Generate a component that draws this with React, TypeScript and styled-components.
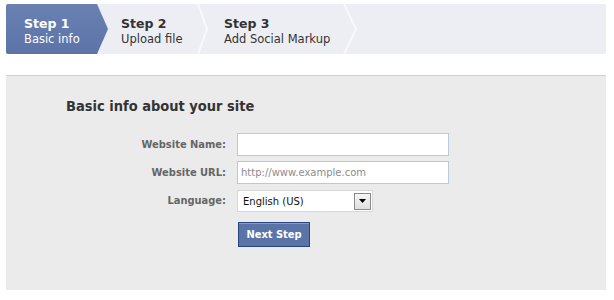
import React from "react";
import styled, { createGlobalStyle } from "styled-components";

const Global = createGlobalStyle`
  html, body { margin: 0; padding: 0; background: #fff; }
  body { font-family: Tahoma, "DejaVu Sans", sans-serif; }
`;

const Page = styled.div`
  width: 614px;
  height: 300px;
  box-sizing: border-box;
  padding: 4px 8px 0 6px;
`;

const StepBar = styled.div`
  display: flex;
  height: 50px;
  background: #eceef4;
  border-radius: 2px;
`;

const Step = styled.div<{ $active?: boolean; $width: number }>`
  position: relative;
  width: ${(p) => p.$width}px;
  flex: none;
  box-sizing: border-box;
  padding: ${(p) => (p.$active ? "13px 0 0 18px" : "13px 0 0 13px")};
  font-family: "DejaVu Sans", Verdana, sans-serif;
  color: ${(p) => (p.$active ? "#fff" : "#333")};
  ${(p) =>
    p.$active &&
    `
    background: linear-gradient(#6a81b2, #5b73a7);
    clip-path: polygon(0 0, 91px 0, 102px 25px, 91px 50px, 0 50px);
    border-radius: 2px 0 0 2px;
  `}
`;

const StepTitle = styled.div`
  font-size: 12.5px;
  font-weight: bold;
  line-height: 14px;
`;

const StepSub = styled.div`
  font-size: 11.5px;
  line-height: 15px;
  margin-top: 1px;
`;

const Chevron = styled.svg`
  position: absolute;
  top: 0;
  right: 0;
`;

const Panel = styled.div`
  margin-top: 21px;
  height: 215px;
  box-sizing: border-box;
  background: #ebebeb;
  border-top: 1px solid #cfcfcf;
  padding: 20px 0 0 60px;
`;

const Heading = styled.h2`
  margin: 0 0 17px;
  font-family: "DejaVu Sans Condensed", "DejaVu Sans", sans-serif;
  font-size: 14.5px;
  line-height: 20px;
  font-weight: bold;
  color: #333;
`;

const Form = styled.div`
  display: grid;
  grid-template-columns: 160px 212px;
  column-gap: 11px;
  row-gap: 5px;
  align-items: center;
`;

const Label = styled.label`
  text-align: right;
  font-family: "DejaVu Sans Condensed", "DejaVu Sans", sans-serif;
  font-size: 11px;
  font-weight: bold;
  color: #666;
`;

const TextInput = styled.input`
  box-sizing: border-box;
  width: 212px;
  height: 23px;
  margin: 0;
  border: 1px solid #bdc7d8;
  background: #fff;
  padding: 3px 3px;
  font-family: "DejaVu Sans", Tahoma, sans-serif;
  font-size: 10px;
  color: #333;
  outline: none;
  &::placeholder { color: #8c8c8c; }
`;

const SelectBox = styled.div`
  box-sizing: border-box;
  width: 136px;
  height: 22px;
  margin-top: 1px;
  border: 1px solid #d8d8d8;
  background: #fff;
  display: flex;
  align-items: center;
  justify-content: space-between;
  padding: 0 1px 0 5px;
  font-family: "DejaVu Sans", Tahoma, sans-serif;
  font-size: 10px;
  color: #111;
`;

const ArrowBox = styled.div`
  box-sizing: border-box;
  width: 17px;
  height: 17px;
  border: 1px solid #8a8a8a;
  background: linear-gradient(#f6f6f6, #dedede);
  display: flex;
  align-items: center;
  justify-content: center;
`;

const Spacer = styled.div``;

const Button = styled.button`
  box-sizing: border-box;
  justify-self: start;
  margin: 5px 0 0 1px;
  width: 72px;
  height: 25px;
  border: 1px solid #29447e;
  background: #5b74a8;
  box-shadow: inset 0 1px 0 #8a9cc2;
  color: #fff;
  font-family: "DejaVu Sans Condensed", "DejaVu Sans", sans-serif;
  font-size: 11px;
  font-weight: bold;
  padding: 0;
`;

const Chev = ({ w, x0, x1 }: { w: number; x0: number; x1: number }) => (
  <Chevron width={w} height="50" viewBox={`0 0 ${w} 50`}>
    <polyline
      points={`${x0},0 ${x1},25 ${x0},50`}
      fill="none"
      stroke="#f8f9fb"
      strokeWidth="2"
    />
  </Chevron>
);

export default function App() {
  return (
    <>
      <Global />
      <Page>
        <StepBar>
          <Step $active $width={102}>
            <StepTitle>Step 1</StepTitle>
            <StepSub>Basic info</StepSub>
          </Step>
          <Step $width={103}>
            <StepTitle>Step 2</StepTitle>
            <StepSub>Upload file</StepSub>
            <Chev w={16} x0={3} x1={12} />
          </Step>
          <Step $width={149}>
            <StepTitle>Step 3</StepTitle>
            <StepSub>Add Social Markup</StepSub>
            <Chev w={20} x0={4} x1={16} />
          </Step>
        </StepBar>
        <Panel>
          <Heading>Basic info about your site</Heading>
          <Form>
            <Label>Website Name:</Label>
            <TextInput type="text" />
            <Label>Website URL:</Label>
            <TextInput type="text" placeholder="http://www.example.com" />
            <Label>Language:</Label>
            <SelectBox>
              <span>English (US)</span>
              <ArrowBox>
                <svg width="7" height="4" viewBox="0 0 7 4">
                  <polygon points="0,0 7,0 3.5,4" fill="#000" />
                </svg>
              </ArrowBox>
            </SelectBox>
            <Spacer />
            <Button>Next Step</Button>
          </Form>
        </Panel>
      </Page>
    </>
  );
}
